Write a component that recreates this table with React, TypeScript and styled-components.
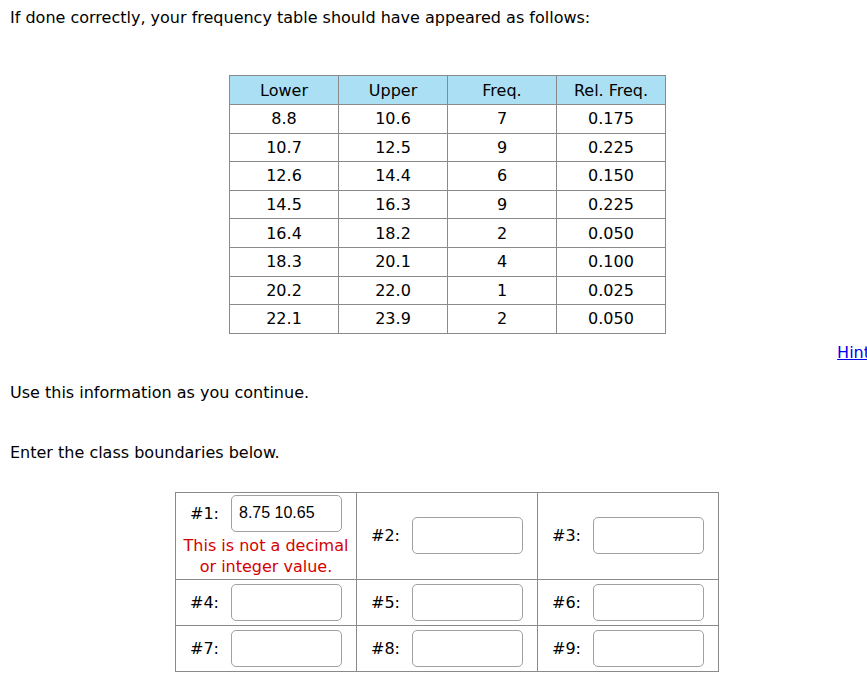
import React from "react";
import styled, { createGlobalStyle } from "styled-components";

const Global = createGlobalStyle`
  html, body { margin: 0; padding: 0; overflow: hidden; background: #fff; }
  body { font-family: "DejaVu Sans", Tahoma, sans-serif; font-size: 16px; color: #000; }
`;

const Page = styled.div`
  width: 867px;
  padding: 7px 0 0 10px;
  box-sizing: border-box;
`;

const Para = styled.p<{ $mt?: number }>`
  margin: ${(p) => p.$mt ?? 0}px 0 0 0;
  line-height: 22px;
`;

const FreqTable = styled.table`
  border-collapse: collapse;
  margin: 46px 0 0 219px;
  text-align: center;
`;

const Th = styled.th`
  background: #abe0f4;
  font-weight: normal;
  border: 1px solid #8a8a8a;
  width: 108px;
  height: 28px;
  padding: 0;
`;

const Td = styled.td`
  border: 1px solid #8a8a8a;
  height: 27.6px;
  padding: 0;
`;

const HintRow = styled.div`
  display: flex;
  justify-content: flex-end;
  margin: 8px -3px 0 0;
`;

const HintLink = styled.a`
  color: #0000ee;
  text-decoration: underline;
  line-height: 22px;
`;

const EntryTable = styled.table`
  border-collapse: collapse;
  margin: 28px 0 0 165px;
`;

const Cell = styled.td<{ $h: number }>`
  border: 1px solid #8a8a8a;
  width: 180px;
  height: ${(p) => p.$h}px;
  padding: 0;
  vertical-align: middle;
`;

const CellInner = styled.div`
  display: flex;
  flex-direction: column;
  align-items: center;
`;

const FieldRow = styled.div`
  display: flex;
  align-items: center;
  gap: 12px;
`;

const Label = styled.span`
  white-space: nowrap;
`;

const Input = styled.input`
  width: 111px;
  height: 37px;
  box-sizing: border-box;
  border: 1px solid #a0a0a0;
  border-radius: 5px;
  padding: 0 7px;
  font-family: "Liberation Sans", Arial, sans-serif;
  font-size: 16px;
  color: #000;
  outline: none;
`;

const ErrorText = styled.div`
  color: #d40000;
  text-align: center;
  line-height: 21px;
  margin-top: 3px;
`;

const rows = [
  ["8.8", "10.6", "7", "0.175"],
  ["10.7", "12.5", "9", "0.225"],
  ["12.6", "14.4", "6", "0.150"],
  ["14.5", "16.3", "9", "0.225"],
  ["16.4", "18.2", "2", "0.050"],
  ["18.3", "20.1", "4", "0.100"],
  ["20.2", "22.0", "1", "0.025"],
  ["22.1", "23.9", "2", "0.050"],
];

function Field({ n, value }: { n: number; value?: string }) {
  return (
    <FieldRow>
      <Label>#{n}:</Label>
      <Input defaultValue={value ?? ""} />
    </FieldRow>
  );
}

export default function App() {
  return (
    <>
      <Global />
      <Page>
        <Para>If done correctly, your frequency table should have appeared as follows:</Para>
        <FreqTable>
          <thead>
            <tr>
              <Th>Lower</Th>
              <Th>Upper</Th>
              <Th>Freq.</Th>
              <Th>Rel. Freq.</Th>
            </tr>
          </thead>
          <tbody>
            {rows.map((r, i) => (
              <tr key={i}>
                {r.map((c, j) => (
                  <Td key={j}>{c}</Td>
                ))}
              </tr>
            ))}
          </tbody>
        </FreqTable>
        <HintRow>
          <HintLink href="#">Hint</HintLink>
        </HintRow>
        <Para $mt={18}>Use this information as you continue.</Para>
        <Para $mt={38}>Enter the class boundaries below.</Para>
        <EntryTable>
          <tbody>
            <tr>
              <Cell $h={86}>
                <CellInner>
                  <Field n={1} value="8.75 10.65" />
                  <ErrorText>
                    This is not a decimal
                    <br />
                    or integer value.
                  </ErrorText>
                </CellInner>
              </Cell>
              <Cell $h={86}>
                <CellInner>
                  <Field n={2} />
                </CellInner>
              </Cell>
              <Cell $h={86}>
                <CellInner>
                  <Field n={3} />
                </CellInner>
              </Cell>
            </tr>
            <tr>
              {[4, 5, 6].map((n) => (
                <Cell $h={45} key={n}>
                  <CellInner>
                    <Field n={n} />
                  </CellInner>
                </Cell>
              ))}
            </tr>
            <tr>
              {[7, 8, 9].map((n) => (
                <Cell $h={45} key={n}>
                  <CellInner>
                    <Field n={n} />
                  </CellInner>
                </Cell>
              ))}
            </tr>
          </tbody>
        </EntryTable>
      </Page>
    </>
  );
}
